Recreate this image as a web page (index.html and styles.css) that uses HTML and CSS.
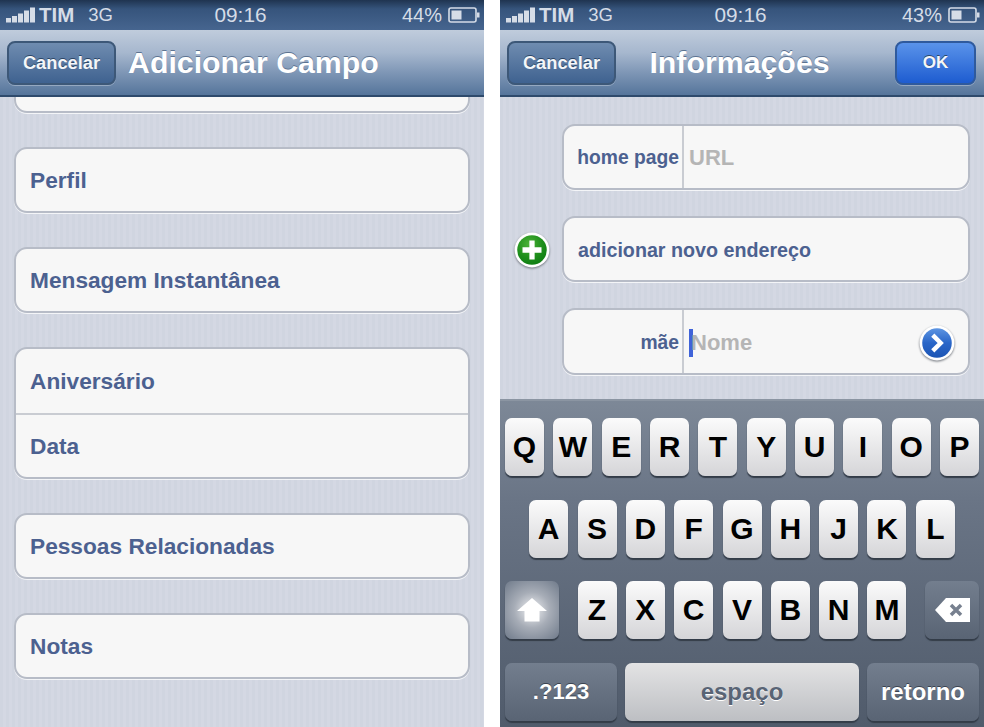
FILE: index.html
```html
<!DOCTYPE html>
<html lang="pt">
<head>
<meta charset="utf-8">
<title>Adicionar Campo</title>
<link rel="stylesheet" href="styles.css">
</head>
<body>
<div class="screens">
  <section class="phone">
    <div class="status">
      <svg class="signal" width="29" height="16" viewBox="0 0 29 16"><path d="M0 11h5v4.500H0zM6 9h5v6.500H6zM12 6.500h5v9h-5zM18 3.500h5v12h-5zM24 .5h5v15h-5z"/></svg>
      <span class="carrier">TIM</span><span class="net">3G</span>
      <span class="time">09:16</span>
      <span class="pct">44%</span>
      <svg class="battery" width="32" height="16" viewBox="0 0 32 16"><rect x="1" y="1" width="27" height="14" rx="2" fill="none" stroke="#d5dce7" stroke-width="1.600"/><rect x="3.500" y="3.500" width="10" height="9" fill="#d5dce7"/><rect x="29" y="5.500" width="2.500" height="5" fill="#d5dce7"/></svg>
    </div>
    <header class="nav">
      <button class="bar-btn cancel">Cancelar</button>
      <h1 class="title title-left">Adicionar Campo</h1>
    </header>
    <main class="list">
      <div class="card card-cut"></div>
      <div class="card"><div class="row">Perfil</div></div>
      <div class="card"><div class="row">Mensagem Instantânea</div></div>
      <div class="card"><div class="row">Aniversário</div><div class="row row-sep">Data</div></div>
      <div class="card"><div class="row">Pessoas Relacionadas</div></div>
      <div class="card"><div class="row">Notas</div></div>
    </main>
  </section>

  <section class="phone">
    <div class="status">
      <svg class="signal" width="29" height="16" viewBox="0 0 29 16"><path d="M0 11h5v4.500H0zM6 9h5v6.500H6zM12 6.500h5v9h-5zM18 3.500h5v12h-5zM24 .5h5v15h-5z"/></svg>
      <span class="carrier">TIM</span><span class="net">3G</span>
      <span class="time">09:16</span>
      <span class="pct">43%</span>
      <svg class="battery" width="32" height="16" viewBox="0 0 32 16"><rect x="1" y="1" width="27" height="14" rx="2" fill="none" stroke="#d5dce7" stroke-width="1.600"/><rect x="3.500" y="3.500" width="10" height="9" fill="#d5dce7"/><rect x="29" y="5.500" width="2.500" height="5" fill="#d5dce7"/></svg>
    </div>
    <header class="nav nav-between">
      <button class="bar-btn cancel">Cancelar</button>
      <h1 class="title title-center">Informações</h1>
      <button class="bar-btn ok">OK</button>
    </header>
    <main class="form">
      <div class="form-line">
        <div class="card field">
          <span class="label">home page</span>
          <span class="value">URL</span>
        </div>
      </div>
      <div class="form-line">
        <svg class="plus" width="38" height="38" viewBox="0 0 36 36">
          <defs>
            <radialGradient id="g" cx=".4" cy=".3" r=".8"><stop offset="0" stop-color="#4cb238"/><stop offset=".55" stop-color="#1f8f1c"/><stop offset="1" stop-color="#0b7a10"/></radialGradient>
          </defs>
          <circle cx="18" cy="18" r="16.500" fill="#fff"/>
          <circle cx="18" cy="18" r="14" fill="url(#g)"/>
          <path d="M15.500 9h5v6.500H27v5h-6.500V27h-5v-6.500H9v-5h6.500z" fill="#fff"/>
        </svg>
        <div class="card field add">adicionar novo endereço</div>
      </div>
      <div class="form-line">
        <div class="card field field-tall">
          <span class="label">mãe</span>
          <span class="value"><i class="caret"></i>Nome</span>
          <svg class="go" width="38" height="38" viewBox="0 0 36 36">
            <defs>
              <linearGradient id="b" x1="0" y1="0" x2="0" y2="1"><stop offset="0" stop-color="#5d95e2"/><stop offset=".5" stop-color="#2a66c8"/><stop offset="1" stop-color="#1c55b4"/></linearGradient>
            </defs>
            <circle cx="18" cy="18" r="16.500" fill="#fff"/>
            <circle cx="18" cy="18" r="14" fill="url(#b)"/>
            <path d="M14 10.500l7.500 7.500-7.500 7.500" fill="none" stroke="#fff" stroke-width="4.200"/>
          </svg>
        </div>
      </div>
    </main>
    <div class="keyboard">
      <div class="keys">
        <span class="key">Q</span><span class="key">W</span><span class="key">E</span><span class="key">R</span><span class="key">T</span><span class="key">Y</span><span class="key">U</span><span class="key">I</span><span class="key">O</span><span class="key">P</span>
      </div>
      <div class="keys">
        <span class="key">A</span><span class="key">S</span><span class="key">D</span><span class="key">F</span><span class="key">G</span><span class="key">H</span><span class="key">J</span><span class="key">K</span><span class="key">L</span>
      </div>
      <div class="keys keys-split">
        <span class="key-dark shift">
          <svg width="32" height="26" viewBox="0 0 32 26"><path d="M16 1L31 14H23.500V24.500H8.500V14H1z" fill="#fff"/></svg>
        </span>
        <div class="keys">
          <span class="key">Z</span><span class="key">X</span><span class="key">C</span><span class="key">V</span><span class="key">B</span><span class="key">N</span><span class="key">M</span>
        </div>
        <span class="key-dark back">
          <svg width="37" height="26" viewBox="0 0 37 26"><path d="M12 1H36V25H12L1 13z" fill="#fff"/><path d="M17 8l10 10M27 8L17 18" stroke="#77808f" stroke-width="3.500"/></svg>
        </span>
      </div>
      <div class="keys keys-bottom">
        <span class="key-dark num">.?123</span>
        <span class="space">espaço</span>
        <span class="key-dark ret">retorno</span>
      </div>
    </div>
  </section>
</div>
</body>
</html>
```

FILE: styles.css
```css
* { box-sizing: border-box; }
html, body { margin: 0; padding: 0; background: #fff; }
body { font-family: "Liberation Sans", Arial, sans-serif; font-weight: 700; }
.screens { display: flex; gap: 16px; width: 984px; height: 727px; overflow: hidden; }
.phone {
  width: 484px; height: 727px; display: flex; flex-direction: column; overflow: hidden;
  background: repeating-linear-gradient(90deg, #d0d5e0 0, #d0d5e0 3px, #d4d8e3 3px, #d4d8e3 6px);
}
.status {
  height: 30px; flex: none; display: flex; align-items: center; padding: 0 4px 0 6px;
  color: #d5dce7; font-size: 20px; font-weight: 400;
  background: linear-gradient(#1f3450 0, #36547c 30%, #46658f 100%);
  position: relative;
}
.signal { fill: #d5dce7; flex: none; margin-top: -1px; }
.carrier { margin-left: 4px; font-weight: 700; font-size: 20.500px; }
.net { margin-left: 14px; font-size: 18.500px; }
.time { position: absolute; left: -3px; right: 0; text-align: center; font-size: 20.800px; }
.pct { margin-left: auto; margin-right: 1px; font-size: 20px; }
.battery { margin-left: 5px; flex: none; }
.nav {
  height: 67px; flex: none; display: flex; align-items: center; padding: 0 8px 0 7px; gap: 12px;
  background: linear-gradient(#c0ccdc 0, #a6b7ce 35%, #7f97b6 65%, #55759b 100%);
  border-bottom: 2px solid #2e4a6c;
}
.nav-between { display: grid; grid-template-columns: 1fr auto 1fr; gap: 0; }
.bar-btn {
  font: 700 18.300px "Liberation Sans", Arial, sans-serif; color: #f4f6f9; height: 44px; border-radius: 8px;
  border: 2px solid #3d5878; text-shadow: 0 -1px 0 #2c4666; padding: 0;
  box-shadow: 0 1px 0 rgba(255,255,255,.3);
}
.cancel { width: 109px; background: linear-gradient(#6f8cb0, #3f6290); }
.ok { width: 81px; justify-self: end; background: linear-gradient(#5a93ea, #1e5cd0); border-color: #2f5a9d; font-size: 17px; }
.title {
  margin: 0; color: #fff; font-size: 30.300px; font-weight: 700; white-space: nowrap;
  text-shadow: 0 -1px 0 #5c7391;
}
.title-center { margin-right: 4px; }
.list { display: flex; flex-direction: column; gap: 34px; padding: 0 14px; flex: 1; min-height: 0; overflow: hidden; }
.card {
  background: #f7f7f7; border-radius: 13px; border: 2px solid #b7bcc7;
  box-shadow: 0 1px 0 rgba(255,255,255,.75);
  flex: none;
}
.card-cut { height: 66px; margin-top: -50px; }
.row {
  height: 64px; display: flex; align-items: center; padding-left: 14px;
  color: #4c6190; font-size: 22.700px;
}
.card > .row:only-child { height: 62px; }
.row-sep { border-top: 2px solid #c9ccd2; }
.form { flex: 1; display: flex; flex-direction: column; gap: 26px; padding: 27px 14px 0 62px; }
.form-line { position: relative; }
.field { height: 66px; display: flex; align-items: stretch; color: #4c6190; position: relative; }
.field-tall { height: 67px; }
.label {
  width: 120px; border-right: 2px solid #c9ccd2; flex: none; display: flex; align-items: center;
  justify-content: flex-end; padding: 2px 3px 0 0; font-size: 19.300px;
}
.value { display: flex; align-items: center; padding: 2px 0 0 5px; color: #b5b5b5; font-size: 22px; }
.add { align-items: center; padding: 2px 0 0 14px; font-size: 19.700px; }
.caret { width: 4px; height: 28px; background: #3f63d9; margin-right: -2px; display: block; }
.plus { position: absolute; left: -49px; top: 15px; filter: drop-shadow(0 1px 1px #6e737b); }
.go { position: absolute; right: 12px; top: 14px; filter: drop-shadow(0 1px 1px #6e737b); }
.keyboard {
  height: 328px; flex: none; display: flex; flex-direction: column; gap: 23.670px; padding: 17px 5px 0;
  border-top: 2px solid #8b95a2;
  background: linear-gradient(#7d8897 0, #6a7586 30%, #505b6b 100%);
}
.keys { display: flex; gap: 9.330px; justify-content: center; height: 58px; }
.keys-split { justify-content: space-between; }
.keys-bottom { justify-content: space-between; gap: 8px; }
.key {
  width: 39px; height: 58px; border-radius: 7px; display: flex; align-items: center; justify-content: center;
  color: #000; font-size: 30px; background: linear-gradient(#fbfbfb, #d5d5d8);
  box-shadow: 0 2px 1px #333c48;
}
.key-dark {
  height: 58px; border-radius: 7px; display: flex; align-items: center; justify-content: center;
  color: #fff; font-size: 24px; background: linear-gradient(#737e8e, #596474);
  box-shadow: 0 2px 1px #333c48; text-shadow: 0 -1px 0 #3a4350;
}
.shift { width: 54px; background: radial-gradient(circle at 50% 50%, #f0f1f3 0, #a7adb7 45%, #6f7a8a 100%); }
.back { width: 54px; }
.num, .ret { width: 112px; }
.num { font-size: 22px; }
.space {
  width: 234px; height: 58px; border-radius: 7px; display: flex; align-items: center; justify-content: center;
  color: #596475; font-size: 24px; background: linear-gradient(#e3e3e4, #bdbfc3);
  box-shadow: 0 2px 1px #333c48; text-shadow: 0 1px 0 #fff;
}
```
